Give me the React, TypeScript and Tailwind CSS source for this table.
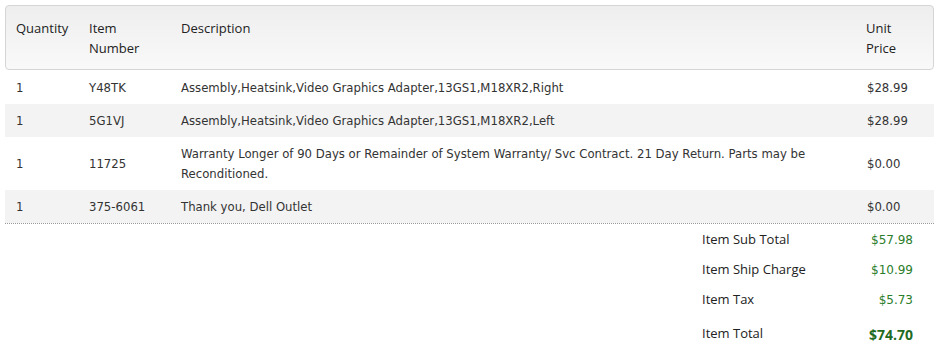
import React from 'react';

interface LineItem {
  qty: string;
  itemNumber: string;
  description: string;
  price: string;
}

const items: LineItem[] = [
  { qty: '1', itemNumber: 'Y48TK', description: 'Assembly,Heatsink,Video Graphics Adapter,13GS1,M18XR2,Right', price: '$28.99' },
  { qty: '1', itemNumber: '5G1VJ', description: 'Assembly,Heatsink,Video Graphics Adapter,13GS1,M18XR2,Left', price: '$28.99' },
  {
    qty: '1',
    itemNumber: '11725',
    description: 'Warranty Longer of 90 Days or Remainder of System Warranty/ Svc Contract. 21 Day Return. Parts may be Reconditioned.',
    price: '$0.00',
  },
  { qty: '1', itemNumber: '375-6061', description: 'Thank you, Dell Outlet', price: '$0.00' },
];

const totals = [
  { label: 'Item Sub Total', value: '$57.98' },
  { label: 'Item Ship Charge', value: '$10.99' },
  { label: 'Item Tax', value: '$5.73' },
];

const headFont = "font-['Open_Sans',_'Liberation_Sans',_sans-serif]";
const bodyFont = "font-['DejaVu_Sans',_'Liberation_Sans',_sans-serif]";

const App: React.FC = () => {
  return (
    <div className="w-[940px] h-[348px] bg-white p-[5px] pr-[6px] overflow-hidden text-[#333]">
      {/* Header */}
      <div
        className={`grid grid-cols-[73px_92px_1fr_67px] pl-[10px] pt-[12px] pb-[11px] border border-[#d5d5d5] rounded-[4px] bg-gradient-to-b from-[#eeeeee] to-[#f9f9f9] text-[13px] leading-[20px] font-medium text-[#222] ${headFont}`}
      >
        <div>Quantity</div>
        <div>
          Item
          <br />
          Number
        </div>
        <div>Description</div>
        <div>
          Unit
          <br />
          Price
        </div>
      </div>

      {/* Rows */}
      <div className={`mt-px text-[11.7px] leading-[20px] ${bodyFont}`}>
        {items.map((item, i) => (
          <div
            key={item.itemNumber}
            className={`grid grid-cols-[73px_92px_1fr_67px] items-center pl-[11px] py-[6.5px] ${
              i % 2 === 1 ? 'bg-[#f3f3f3]' : 'bg-white'
            }`}
          >
            <div>{item.qty}</div>
            <div>{item.itemNumber}</div>
            <div className="pr-[50px]">{item.description}</div>
            <div>{item.price}</div>
          </div>
        ))}
      </div>

      <div className="border-t border-dotted border-[#999]" />

      {/* Totals */}
      <div className="ml-auto mr-[21px] w-[211px] pt-px">
        {totals.map((t) => (
          <div key={t.label} className="flex items-center justify-between h-[30px]">
            <span className={`text-[13px] text-[#222] ${headFont}`}>{t.label}</span>
            <span className={`text-[12px] text-[#2a7d2a] ${bodyFont}`}>{t.value}</span>
          </div>
        ))}
        <div className="flex items-center justify-between h-[38px]">
          <span className={`text-[13px] text-[#222] ${headFont}`}>Item Total</span>
          <span className={`text-[14px] font-bold text-[#1f6b1f] ${headFont}`}>$74.70</span>
        </div>
      </div>
    </div>
  );
};

export default App;
